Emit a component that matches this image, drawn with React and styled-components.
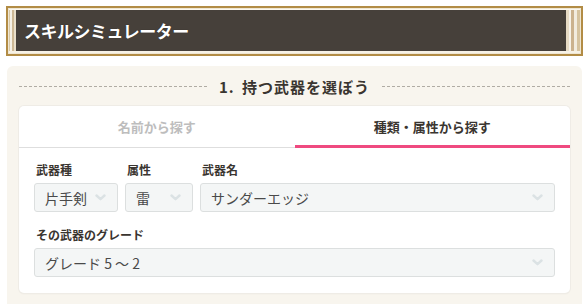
import React from "react";
import styled, { createGlobalStyle } from "styled-components";

const Global = createGlobalStyle`
  html, body { margin: 0; padding: 0; background: #fff; }
  body { font-family: "Noto Sans CJK JP", "Noto Sans", sans-serif; color: #333; }
`;

const Page = styled.div`
  width: 588px;
  padding: 6px 5px 0 6px;
  box-sizing: border-box;
`;

const HeaderFrame = styled.header`
  height: 50px;
  box-sizing: border-box;
  border: 2px solid #b28c45;
  padding: 1px;
  background: #efe6d2;
`;

const HeaderInner = styled.div`
  height: 100%;
  box-sizing: border-box;
  border-top: 1px solid #fbf8f0;
  border-bottom: 2px solid #f7f2e6;
  background: linear-gradient(
    to right,
    #d9c9a6 0px, #d9c9a6 1px,
    #f6f1e6 1px, #f6f1e6 3px,
    #cdb894 3px, #cdb894 5px,
    #e9dfca 5px, #e9dfca 7px,
    #46403a 7px, #46403a calc(100% - 14px),
    #e6dbc4 calc(100% - 14px), #e6dbc4 calc(100% - 11px),
    #f7f3ea calc(100% - 11px), #f7f3ea calc(100% - 9px),
    #cbb28e calc(100% - 9px), #cbb28e calc(100% - 6px),
    #f2ecdf calc(100% - 6px), #f2ecdf calc(100% - 3px),
    #d6c39f calc(100% - 3px)
  );
  display: flex;
  align-items: center;
  padding-left: 15px;
`;

const HeaderTitle = styled.h1`
  margin: 0;
  font-size: 17px;
  font-weight: 700;
  color: #fff;
  letter-spacing: -0.5px;
  text-shadow: 0 0 1px rgba(0,0,0,0.4);
`;

const Section = styled.section`
  margin-top: 10px;
  margin-left: 1px;
  margin-right: 1px;
  background: #f8f5ee;
  border-radius: 6px 6px 0 0;
  padding: 8px 12px 11px;
`;

const SectionHead = styled.div`
  display: flex;
  align-items: center;
  gap: 12px;
  height: 24px;
  margin-bottom: 8px;
`;

const Dash = styled.div`
  flex: 1;
  height: 1px;
  background: repeating-linear-gradient(to right, #b0aca4 0 3px, transparent 3px 5px);
`;

const SectionTitle = styled.h2`
  margin: 0;
  font-size: 15px;
  font-weight: 700;
  color: #3a3530;
  letter-spacing: 1px;
  word-spacing: 3px;
`;

const Card = styled.div`
  background: #fff;
  border-radius: 5px;
  box-shadow: 0 0 0 1px #efece6, 0 1px 2px rgba(0,0,0,0.06);
  overflow: hidden;
`;

const Tabs = styled.div`
  display: grid;
  grid-template-columns: 1fr 1fr;
  border-bottom: 1px solid #dedede;
`;

const Tab = styled.div`
  height: 42px;
  margin-bottom: -1px;
  padding-top: 2px;
  box-sizing: border-box;
  display: flex;
  align-items: center;
  justify-content: center;
  font-size: 13px;
  font-weight: 700;
  color: ${(p) => (p.$active ? "#3a3530" : "#bdbdbd")};
  border-bottom: 3px solid ${(p) => (p.$active ? "#ef4a80" : "transparent")};
`;

const Body = styled.div`
  padding: 13px 15px 16px;
`;

const Row = styled.div`
  display: flex;
  gap: 7px;
`;

const Field = styled.div`
  display: flex;
  flex-direction: column;
  width: ${(p) => p.$w || "auto"};
  flex: ${(p) => (p.$grow ? 1 : "none")};
  margin-top: ${(p) => p.$mt || 0}px;
`;

const Label = styled.div`
  font-size: 12px;
  font-weight: 700;
  color: #3a3530;
  padding-left: 2px;
  height: 17px;
  line-height: 17px;
  margin-bottom: 5px;
`;

const Select = styled.div`
  height: 29px;
  box-sizing: border-box;
  background: #f4f6f6;
  border: 1px solid #dcdfdf;
  border-radius: 3px;
  display: flex;
  align-items: center;
  justify-content: space-between;
  padding: 0 11px 0 10px;
  font-size: 14px;
  color: #4a4a4a;
`;

const Chevron = () => (
  <svg width="11" height="7" viewBox="0 0 11 7">
    <path d="M1.5 1.5 L5.5 5.2 L9.5 1.5" fill="none" stroke="#dbe2e4" strokeWidth="2.4" strokeLinecap="round" strokeLinejoin="round" />
  </svg>
);

export default function App() {
  return (
    <>
      <Global />
      <Page>
        <HeaderFrame>
          <HeaderInner>
            <HeaderTitle>スキルシミュレーター</HeaderTitle>
          </HeaderInner>
        </HeaderFrame>
        <Section>
          <SectionHead>
            <Dash />
            <SectionTitle>1. 持つ武器を選ぼう</SectionTitle>
            <Dash />
          </SectionHead>
          <Card>
            <Tabs>
              <Tab>名前から探す</Tab>
              <Tab $active>種類・属性から探す</Tab>
            </Tabs>
            <Body>
              <Row>
                <Field $w="84px">
                  <Label>武器種</Label>
                  <Select>片手剣<Chevron /></Select>
                </Field>
                <Field $w="68px">
                  <Label>属性</Label>
                  <Select>雷<Chevron /></Select>
                </Field>
                <Field $grow>
                  <Label>武器名</Label>
                  <Select>サンダーエッジ<Chevron /></Select>
                </Field>
              </Row>
              <Field $mt={14}>
                <Label>その武器のグレード</Label>
                <Select>グレード 5 ～ 2<Chevron /></Select>
              </Field>
            </Body>
          </Card>
        </Section>
      </Page>
    </>
  );
}
